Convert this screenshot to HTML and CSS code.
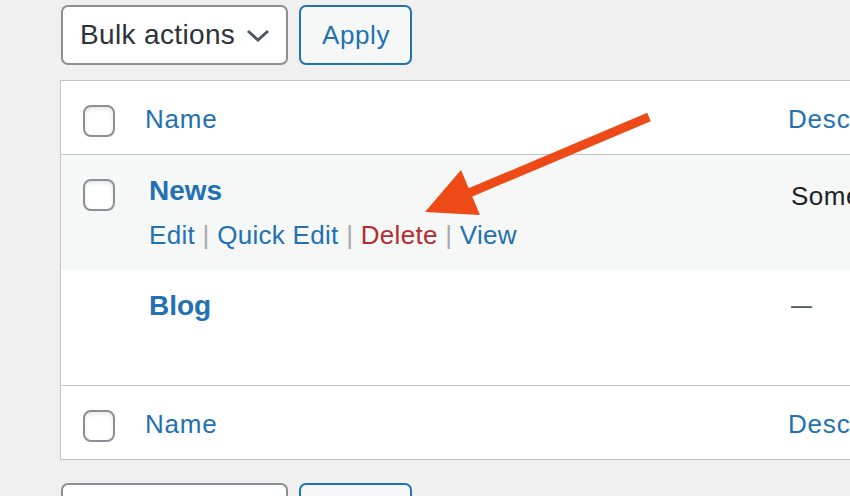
FILE: index.html
```html
<!DOCTYPE html>
<html lang="en">
<head>
    <meta charset="UTF-8">
    <meta name="viewport" content="width=device-width, initial-scale=1.0">
    <title>Categories</title>
    <link rel="stylesheet" href="styles.css">
</head>
<body>
    <div class="wrap">
        <div class="tablenav top">
            <div class="select">
                <span>Bulk actions</span>
                <svg class="chevron" width="24" height="14" viewBox="0 0 24 14"><path d="M2 2 L12 11 L22 2" fill="none" stroke="#50575e" stroke-width="3"/></svg>
            </div>
            <button class="button">Apply</button>
        </div>

        <table class="list-table">
            <colgroup>
                <col class="col-check">
                <col class="col-name">
                <col class="col-desc">
            </colgroup>
            <thead>
                <tr>
                    <th class="check"><input type="checkbox"></th>
                    <th class="name"><a href="#">Name</a></th>
                    <th class="desc"><a href="#">Description</a></th>
                </tr>
            </thead>
            <tbody>
                <tr class="alt">
                    <td class="check"><input type="checkbox"></td>
                    <td class="name">
                        <a class="row-title" href="#">News</a>
                        <div class="row-actions">
                            <a href="#">Edit</a> <span class="sep">|</span> <a href="#">Quick Edit</a> <span class="sep">|</span> <a class="delete" href="#">Delete</a> <span class="sep">|</span> <a href="#">View</a>
                        </div>
                    </td>
                    <td class="desc">Some news about the site</td>
                </tr>
                <tr>
                    <td class="check"></td>
                    <td class="name">
                        <a class="row-title" href="#">Blog</a>
                        <div class="row-actions hidden">
                            <a href="#">Edit</a> <span class="sep">|</span> <a href="#">Quick Edit</a>
                        </div>
                    </td>
                    <td class="desc"><span class="dash">—</span></td>
                </tr>
            </tbody>
            <tfoot>
                <tr>
                    <th class="check"><input type="checkbox"></th>
                    <th class="name"><a href="#">Name</a></th>
                    <th class="desc"><a href="#">Description</a></th>
                </tr>
            </tfoot>
        </table>

        <div class="tablenav bottom">
            <div class="select">
                <span>Bulk actions</span>
                <svg class="chevron" width="24" height="14" viewBox="0 0 24 14"><path d="M2 2 L12 11 L22 2" fill="none" stroke="#50575e" stroke-width="3"/></svg>
            </div>
            <button class="button">Apply</button>
        </div>
    </div>

    <!-- annotation arrow -->
    <svg class="arrow" width="850" height="496" viewBox="0 0 850 496">
        <line x1="649" y1="117" x2="462" y2="196" stroke="#ee4a18" stroke-width="9"/>
        <polygon points="425,212 461,170 480,215" fill="#ee4a18"/>
    </svg>
</body>
</html>
```

FILE: styles.css
```css
body {
    margin: 0;
    background-color: #f0f0f1;
    font-family: "Liberation Sans", Arial, sans-serif;
    color: #2c3338;
    overflow: hidden;
    height: 496px;
}
a {
    color: #2271b1;
    text-decoration: none;
}
.wrap {
    padding: 5px 0 0 60px;
}
.tablenav {
    display: flex;
    align-items: center;
    gap: 11px;
}
.tablenav.top {
    margin-bottom: 15px;
}
.tablenav.bottom {
    margin-top: 23px;
}
.select {
    box-sizing: border-box;
    width: 227px;
    height: 60px;
    margin-left: 1px;
    padding: 0 16px 0 17px;
    display: flex;
    align-items: center;
    justify-content: space-between;
    background-color: white;
    border: 2px solid #8c8f94;
    border-radius: 7px;
    font-size: 28px;
    letter-spacing: 0.35px;
    color: #2c3338;
}
.chevron {
    margin-top: 2px;
}
.button {
    box-sizing: border-box;
    width: 113px;
    height: 60px;
    padding: 0 0 0 21px;
    text-align: left;
    background-color: #f6f7f7;
    border: 2px solid #2271b1;
    border-radius: 7px;
    color: #2271b1;
    font-family: inherit;
    font-size: 26px;
    letter-spacing: 0.6px;
}
.list-table {
    width: 1100px;
    table-layout: fixed;
    border-collapse: separate;
    border-spacing: 0;
    background-color: white;
    border: 1px solid #c3c4c7;
}
.col-check {
    width: 72px;
}
.col-name {
    width: 643px;
}
th, td {
    vertical-align: top;
    text-align: left;
    font-weight: normal;
    padding: 0;
}
thead th {
    border-bottom: 1px solid #c3c4c7;
}
tfoot th {
    border-top: 1px solid #c3c4c7;
}
th {
    font-size: 26px;
    line-height: 36px;
    letter-spacing: 0.8px;
    height: 73px;
    box-sizing: border-box;
}
th.name, th.desc {
    padding: 20px 12px 17px;
}
.check {
    padding: 24px 0 0 22px;
}
input[type="checkbox"] {
    appearance: none;
    display: block;
    box-sizing: border-box;
    width: 32px;
    height: 32px;
    margin: 0;
    background-color: white;
    border: 2px solid #8c8f94;
    border-radius: 8px;
    box-shadow: inset 0 2px 4px rgba(0, 0, 0, 0.1);
}
tbody tr.alt {
    background-color: #f6f7f7;
}
td.name {
    padding: 16px 16px 17px;
}
.row-title {
    display: block;
    font-size: 28px;
    line-height: 40px;
    font-weight: bold;
}
.row-actions {
    padding-top: 6px;
    font-size: 26px;
    line-height: 36px;
    letter-spacing: 0.3px;
    white-space: nowrap;
}
.row-actions.hidden {
    visibility: hidden;
}
.row-actions .sep {
    color: #a7aaad;
}
.row-actions .delete {
    color: #b32d2e;
}
td.desc {
    padding: 23px 15px 0;
    font-size: 26px;
    line-height: 36px;
    letter-spacing: 0.5px;
    color: #1d2327;
    white-space: nowrap;
}
.dash {
    display: inline-block;
    color: #50575e;
    transform: translateY(-6px) scaleX(0.8);
    transform-origin: left center;
}
.arrow {
    position: absolute;
    left: 0;
    top: 0;
    pointer-events: none;
}
```
